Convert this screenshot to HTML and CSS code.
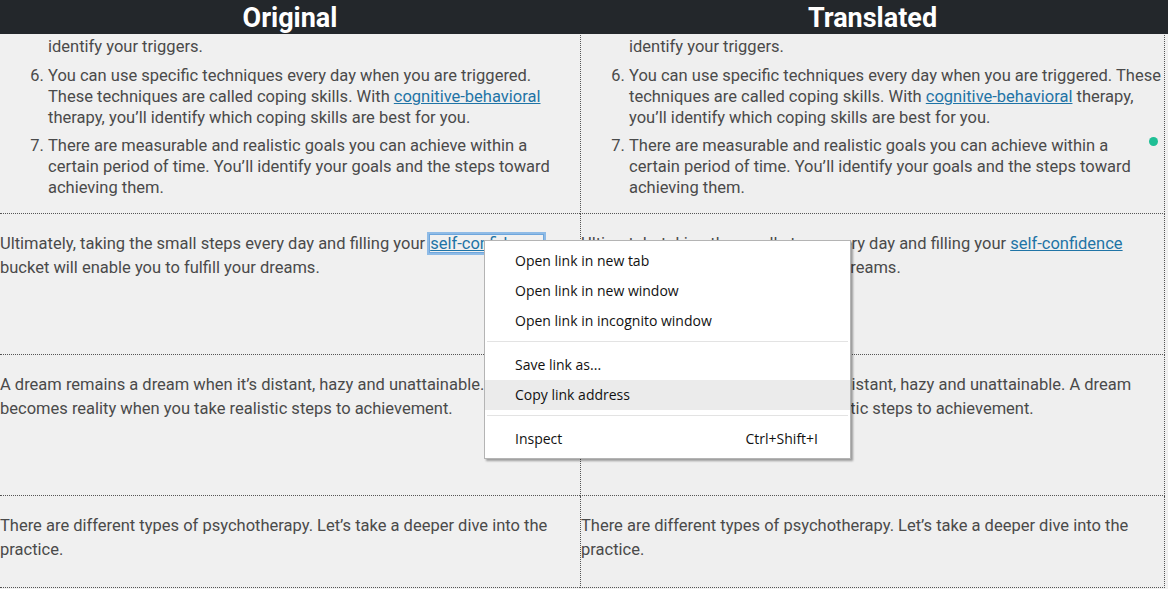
FILE: index.html
```html
<!DOCTYPE html>
<html lang="en">
<head>
<meta charset="utf-8">
<title>Original / Translated</title>
<link rel="stylesheet" href="styles.css">
</head>
<body>
<header class="topbar">
  <div class="topbar-col">Original</div>
  <div class="topbar-col">Translated</div>
</header>

<main class="compare">
  <div class="cell cell-left row-list">
    <ol class="steps" start="5">
      <li>Your feelings are tied to specific triggers. With therapy, you’ll<br>identify your triggers.</li>
      <li>You can use specific techniques every day when you are triggered. These techniques are called coping skills. With <a href="#" class="link">cognitive-behavioral</a> therapy, you’ll identify which coping skills are best for you.</li>
      <li>There are measurable and realistic goals you can achieve within a certain period of time. You’ll identify your goals and the steps toward achieving them.</li>
    </ol>
  </div>
  <div class="cell cell-right row-list">
    <ol class="steps" start="5">
      <li>Your feelings are tied to specific triggers. With therapy, you’ll<br>identify your triggers.</li>
      <li>You can use specific techniques every day when you are triggered. These techniques are called coping skills. With <a href="#" class="link">cognitive-behavioral</a> therapy, you’ll identify which coping skills are best for you.</li>
      <li>There are measurable and realistic goals you can achieve within a certain period of time. You’ll identify your goals and the steps toward achieving them.</li>
    </ol>
    <span class="status-dot"></span>
  </div>

  <div class="cell cell-left row-tall">
    <p>Ultimately, taking the small steps every day and filling your <a href="#" class="link link-focus">self-confidence</a> bucket will enable you to fulfill your dreams.</p>
  </div>
  <div class="cell cell-right row-tall">
    <p>Ultimately, taking the small steps every day and filling your <a href="#" class="link">self-confidence</a> bucket will enable you to fulfill your dreams.</p>
  </div>

  <div class="cell cell-left row-tall">
    <p>A dream remains a dream when it’s distant, hazy and unattainable. A dream becomes reality when you take realistic steps to achievement.</p>
  </div>
  <div class="cell cell-right row-tall">
    <p>A dream remains a dream when it’s distant, hazy and unattainable. A dream becomes reality when you take realistic steps to achievement.</p>
  </div>

  <div class="cell cell-left row-short">
    <p>There are different types of psychotherapy. Let’s take a deeper dive into the practice.</p>
  </div>
  <div class="cell cell-right row-short">
    <p>There are different types of psychotherapy. Let’s take a deeper dive into the practice.</p>
  </div>
</main>

<ul class="context-menu">
  <li class="menu-item">Open link in new tab</li>
  <li class="menu-item">Open link in new window</li>
  <li class="menu-item">Open link in incognito window</li>
  <li class="menu-sep"></li>
  <li class="menu-item">Save link as...</li>
  <li class="menu-item is-hover">Copy link address</li>
  <li class="menu-sep"></li>
  <li class="menu-item"><span>Inspect</span><span class="shortcut">Ctrl+Shift+I</span></li>
</ul>
</body>
</html>
```

FILE: styles.css
```css
* { box-sizing: border-box; }

html, body {
  margin: 0;
  padding: 0;
  background: #f0f0f0;
  overflow: hidden;
}

body {
  font-family: Roboto, "Liberation Sans", sans-serif;
  font-size: 16.5px;
  color: #4a4a4a;
  width: 1168px;
  height: 589px;
  position: relative;
}

.topbar {
  position: fixed;
  top: 0;
  left: 0;
  width: 1168px;
  height: 34px;
  background: #23272b;
  display: grid;
  grid-template-columns: 580px 585px;
  z-index: 5;
}

.topbar-col {
  color: #ffffff;
  font-weight: 700;
  font-size: 27px;
  line-height: 36px;
  text-align: center;
}

.compare {
  display: grid;
  grid-template-columns: 580px 585px;
  margin-top: -1px;
}

.cell {
  border-bottom: 1px dotted #555;
  position: relative;
}

.cell-left {
  background: #f0f0f0;
}

.cell-right {
  background: #efefef;
  border-left: 1px dotted #555;
  border-right: 1px dotted #555;
}

.row-list { padding: 16px 0 15px; }

.row-tall {
  min-height: 141px;
  padding-top: 18px;
}

.row-short {
  min-height: 92px;
  padding-top: 18px;
}

.cell p {
  margin: 0;
  line-height: 24px;
}

.steps {
  margin: 0;
  padding-left: 48px;
  line-height: 21px;
}

.cell-left .steps { padding-right: 3px; }
.cell-right .steps { padding-right: 2px; }

.steps li + li { margin-top: 7.5px; }

.link {
  color: #1f74a6;
  text-decoration: underline;
}

.link-focus {
  outline: 2px solid #8fbbe6;
  outline-offset: 0;
  box-shadow: inset 0 0 0 1px #6ea6dc;
  padding: 0 1px;
}

.status-dot {
  position: absolute;
  left: 568px;
  top: 138px;
  width: 9px;
  height: 9px;
  border-radius: 50%;
  background: #1fbf95;
}

.context-menu {
  position: absolute;
  left: 484px;
  top: 240px;
  width: 367px;
  margin: 0;
  padding: 5px 0 4px;
  list-style: none;
  background: #ffffff;
  border: 1px solid #b4b4b4;
  box-shadow: 2px 2px 2px rgba(0, 0, 0, 0.35);
  font-family: "Open Sans", "Noto Sans", sans-serif;
  font-size: 14px;
  color: #111;
  z-index: 10;
}

.menu-item {
  height: 30px;
  line-height: 30px;
  padding: 0 32px 0 30px;
  display: flex;
  justify-content: space-between;
}

.menu-item.is-hover { background: #ebebeb; }

.menu-sep {
  height: 14px;
  position: relative;
}

.menu-sep::after {
  content: "";
  position: absolute;
  left: 2px;
  right: 2px;
  top: 5px;
  height: 1px;
  background: #e3e3e3;
}
```
